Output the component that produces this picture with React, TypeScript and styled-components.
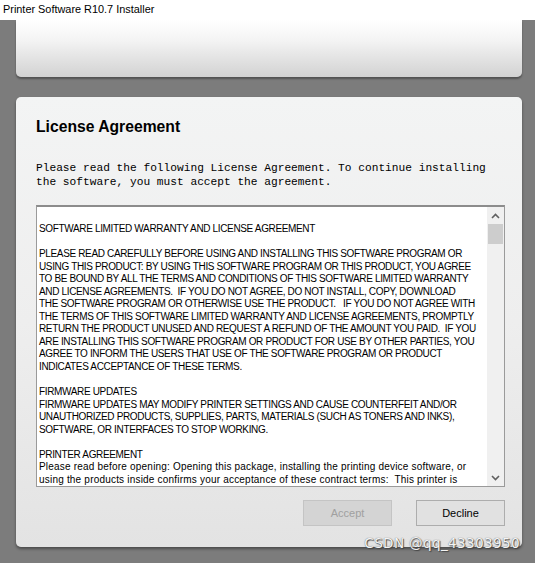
import styled, { createGlobalStyle } from "styled-components";

const GlobalStyle = createGlobalStyle`
  html, body {
    margin: 0;
    padding: 0;
    background: #7c7c7c;
  }
  body {
    width: 535px;
    height: 563px;
    overflow: hidden;
  }
`;

const licenseLines = [
  "SOFTWARE LIMITED WARRANTY AND LICENSE AGREEMENT",
  "",
  "PLEASE READ CAREFULLY BEFORE USING AND INSTALLING THIS SOFTWARE PROGRAM OR",
  "USING THIS PRODUCT: BY USING THIS SOFTWARE PROGRAM OR THIS PRODUCT, YOU AGREE",
  "TO BE BOUND BY ALL THE TERMS AND CONDITIONS OF THIS SOFTWARE LIMITED WARRANTY",
  "AND LICENSE AGREEMENTS.  IF YOU DO NOT AGREE, DO NOT INSTALL, COPY, DOWNLOAD",
  "THE SOFTWARE PROGRAM OR OTHERWISE USE THE PRODUCT.   IF YOU DO NOT AGREE WITH",
  "THE TERMS OF THIS SOFTWARE LIMITED WARRANTY AND LICENSE AGREEMENTS, PROMPTLY",
  "RETURN THE PRODUCT UNUSED AND REQUEST A REFUND OF THE AMOUNT YOU PAID.  IF YOU",
  "ARE INSTALLING THIS SOFTWARE PROGRAM OR PRODUCT FOR USE BY OTHER PARTIES, YOU",
  "AGREE TO INFORM THE USERS THAT USE OF THE SOFTWARE PROGRAM OR PRODUCT",
  "INDICATES ACCEPTANCE OF THESE TERMS.",
  "",
  "FIRMWARE UPDATES",
  "FIRMWARE UPDATES MAY MODIFY PRINTER SETTINGS AND CAUSE COUNTERFEIT AND/OR",
  "UNAUTHORIZED PRODUCTS, SUPPLIES, PARTS, MATERIALS (SUCH AS TONERS AND INKS),",
  "SOFTWARE, OR INTERFACES TO STOP WORKING.",
  "",
  "PRINTER AGREEMENT",
  "Please read before opening: Opening this package, installing the printing device software, or",
  "using the products inside confirms your acceptance of these contract terms:  This printer is",
];

const App = () => {
  return (
    <>
      <GlobalStyle />
      <Window>
        <TitleBar>Printer Software R10.7 Installer</TitleBar>
        <Stage>
          <BannerPanel />
          <MainPanel>
            <Heading>License Agreement</Heading>
            <Intro>
              Please read the following License Agreement. To continue installing
              <br />
              the software, you must accept the agreement.
            </Intro>
            <LicenseBox>
              <LicenseText>
                {licenseLines.map((line, i) => (
                  <Line key={i} $mixed={line !== line.toUpperCase()}>
                    {line || "\u00a0"}
                  </Line>
                ))}
              </LicenseText>
              <ScrollBar>
                <Arrow>
                  <svg width="9" height="6" viewBox="0 0 9 6">
                    <path d="M1 5 L4.5 1.5 L8 5" stroke="#606060" strokeWidth="1.6" fill="none" />
                  </svg>
                </Arrow>
                <Thumb />
                <Track />
                <Arrow>
                  <svg width="9" height="6" viewBox="0 0 9 6">
                    <path d="M1 1 L4.5 4.5 L8 1" stroke="#606060" strokeWidth="1.6" fill="none" />
                  </svg>
                </Arrow>
              </ScrollBar>
            </LicenseBox>
            <ButtonRow>
              <DialogButton disabled>Accept</DialogButton>
              <DialogButton>Decline</DialogButton>
            </ButtonRow>
            <Watermark>CSDN @qq_43303950</Watermark>
          </MainPanel>
        </Stage>
      </Window>
    </>
  );
};

export default App;

const Window = styled.div`
  width: 535px;
  height: 563px;
  display: flex;
  flex-direction: column;
`;

const TitleBar = styled.div`
  height: 20px;
  background: #ffffff;
  font-family: "Liberation Sans", Arial, sans-serif;
  font-size: 10.9px;
  line-height: 18px;
  padding-left: 3px;
  color: #000;
`;

const Stage = styled.div`
  flex: 1;
  display: flex;
  flex-direction: column;
  gap: 20px;
  padding: 0 13px 0 16px;
  background: #7c7c7c;
`;

const BannerPanel = styled.div`
  height: 57px;
  border-radius: 0 0 5px 5px;
  background: linear-gradient(to bottom, #ffffff 0%, #f4f4f4 35%, #d2d2d2 100%);
  box-shadow: 0 2px 2px rgba(0, 0, 0, 0.35);
`;

const MainPanel = styled.div`
  position: relative;
  height: 450px;
  box-sizing: border-box;
  border-radius: 5px;
  background: linear-gradient(to bottom, #f3f4f4 0%, #eeeeee 50%, #e3e3e3 100%);
  box-shadow: 0 2px 3px rgba(0, 0, 0, 0.4);
  padding: 20px 17px 0 20px;
  display: flex;
  flex-direction: column;
`;

const Heading = styled.h1`
  margin: 0;
  font-family: "Liberation Sans", Arial, sans-serif;
  font-size: 15.7px;
  font-weight: bold;
  line-height: 20px;
  color: #000;
`;

const Intro = styled.p`
  margin: 24px 0 0 0;
  font-family: "Liberation Mono", "Courier New", monospace;
  font-size: 11.2px;
  line-height: 14px;
  color: #000;
  white-space: nowrap;
`;

const LicenseBox = styled.div`
  margin-top: 16px;
  height: 282px;
  width: 469px;
  box-sizing: border-box;
  border: 1px solid #9a9a9a;
  border-top: 2px solid #8c8c8c;
  background: #ffffff;
  display: flex;
`;

const LicenseText = styled.div`
  flex: 1;
  overflow: hidden;
  padding: 16px 0 0 2px;
  font-family: "Liberation Sans", Tahoma, sans-serif;
  font-size: 10px;
  line-height: 12.55px;
  color: #000;
`;

const Line = styled.div<{ $mixed?: boolean }>`
  white-space: pre;
  letter-spacing: ${(p) => (p.$mixed ? "0.2px" : "-0.35px")};
`;

const ScrollBar = styled.div`
  width: 17px;
  background: #f0f0f0;
  display: flex;
  flex-direction: column;
  align-items: center;
`;

const Arrow = styled.div`
  height: 17px;
  display: flex;
  align-items: center;
  justify-content: center;
`;

const Thumb = styled.div`
  width: 15px;
  height: 20px;
  background: #cdcdcd;
`;

const Track = styled.div`
  flex: 1;
`;

const ButtonRow = styled.div`
  margin-top: 13px;
  display: flex;
  justify-content: flex-end;
  gap: 24px;
`;

const DialogButton = styled.button`
  width: 89px;
  height: 26px;
  box-sizing: border-box;
  font-family: "Liberation Sans", Tahoma, sans-serif;
  font-size: 11px;
  color: #000;
  background: #e1e1e1;
  border: 1px solid #adadad;
  padding: 0;

  &:disabled {
    color: #a0a0a0;
    background: #d4d4d4;
    border-color: #c4c4c4;
  }
`;

const Watermark = styled.div`
  position: absolute;
  right: 2px;
  bottom: -4px;
  font-family: "DejaVu Sans", Arial, sans-serif;
  font-size: 13.5px;
  letter-spacing: 0.4px;
  color: #f4f4f4;
  text-shadow: 0 0 1px #555, 1px 1px 1px #444;
`;
